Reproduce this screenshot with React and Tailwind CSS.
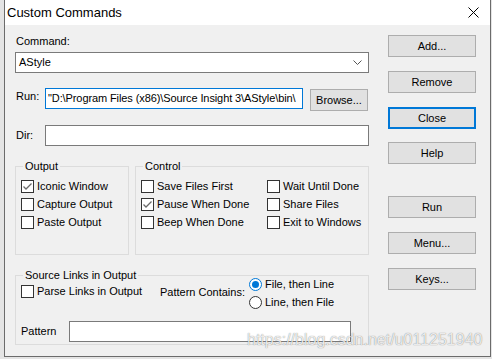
import React from "react";

const Check = ({ checked }) => (
  <span className="w-[13px] h-[13px] border border-[#333333] bg-white flex items-center justify-center shrink-0">
    {checked && (
      <svg width="11" height="11" viewBox="0 0 11 11">
        <polyline points="1.5,5.5 4,8 9.5,2.5" fill="none" stroke="#6a6a6a" strokeWidth="1.3" />
      </svg>
    )}
  </span>
);

const CheckRow = ({ label, checked }) => (
  <div className="flex items-center gap-[3px] h-[13px]">
    <Check checked={checked} />
    <span className="leading-[13px] whitespace-nowrap">{label}</span>
  </div>
);

const Radio = ({ label, checked }) => (
  <div className="flex items-center gap-[3px] h-[13px]">
    <span
      className={
        checked
          ? "w-[13px] h-[13px] rounded-full border border-[#0078d7] bg-white flex items-center justify-center shrink-0"
          : "w-[13px] h-[13px] rounded-full border border-[#333333] bg-white flex items-center justify-center shrink-0"
      }
    >
      {checked && <span className="w-[7px] h-[7px] rounded-full bg-[#0078d7]" />}
    </span>
    <span className="leading-[13px] whitespace-nowrap">{label}</span>
  </div>
);

const Btn = ({ children, className = "", active }) => (
  <div
    className={
      (active
        ? "border-2 border-[#0078d7] "
        : "border border-[#adadad] ") +
      "h-[22px] bg-[#e1e1e1] flex items-center justify-center leading-[13px] " +
      className
    }
  >
    {children}
  </div>
);

export default function App() {
  return (
    <div className="w-[492px] h-[359px] bg-[#e4e4e4] relative overflow-hidden text-[11px] text-black font-['Liberation_Sans',Arial,sans-serif]">
      <div className="ml-[4px] w-[487px] h-[357px] bg-[#f0f0f0] border-l border-r border-b border-[#6b6b6b] flex flex-col">
        {/* Title bar */}
        <div className="h-[25px] bg-white flex items-center justify-between shrink-0">
          <span className="pl-[2px] text-[13px] leading-[16px]">Custom Commands</span>
          <svg width="11" height="11" viewBox="0 0 11 11" className="mr-[11px]">
            <path d="M0.5 0.5 L10.5 10.5 M10.5 0.5 L0.5 10.5" stroke="#000" strokeWidth="1" />
          </svg>
        </div>

        {/* Body */}
        <div className="flex flex-1">
          {/* Left column */}
          <div className="ml-[10px] w-[354px] flex flex-col">
            <div className="mt-[10px] ml-[1px] leading-[13px]">Command:</div>
            <div className="mt-[4px] h-[21px] bg-white border border-[#7a7a7a] flex items-center justify-between">
              <span className="pl-[3px] leading-[13px]">AStyle</span>
              <svg width="9" height="5" viewBox="0 0 9 5" className="mr-[6px]">
                <polyline points="0.5,0.5 4.5,4.5 8.5,0.5" fill="none" stroke="#555" strokeWidth="1" />
              </svg>
            </div>

            <div className="mt-[15px] flex items-start">
              <span className="ml-[1px] w-[29px] leading-[13px] mt-[2px]">Run:</span>
              <div className="w-[258px] h-[21px] bg-white border border-[#0078d7] flex items-center overflow-hidden">
                <span className="pl-[2px] whitespace-nowrap leading-[13px] tracking-[-0.1px]">
                  "D:\Program Files (x86)\Source Insight 3\AStyle\bin\
                </span>
              </div>
              <Btn className="ml-[7px] mt-[1px] w-[58px] h-[21px]">Browse...</Btn>
            </div>

            <div className="mt-[14px] flex items-center">
              <span className="ml-[1px] w-[29px] leading-[13px]">Dir:</span>
              <div className="flex-1 h-[21px] bg-white border border-[#7a7a7a]" />
            </div>

            <div className="mt-[14px] flex gap-[6px]">
              <fieldset className="w-[114px] h-[95px] border border-[#dcdcdc]">
                <legend className="ml-[7px] px-[2px] leading-[13px]">Output</legend>
                <div className="pt-[7px] pl-[5px] flex flex-col gap-[5px]">
                  <CheckRow label="Iconic Window" checked />
                  <CheckRow label="Capture Output" />
                  <CheckRow label="Paste Output" />
                </div>
              </fieldset>
              <fieldset className="flex-1 h-[95px] border border-[#dcdcdc]">
                <legend className="ml-[7px] px-[2px] leading-[13px]">Control</legend>
                <div className="pt-[7px] pl-[5px] grid grid-cols-[126px_1fr] gap-y-[5px]">
                  <CheckRow label="Save Files First" />
                  <CheckRow label="Wait Until Done" />
                  <CheckRow label="Pause When Done" checked />
                  <CheckRow label="Share Files" />
                  <CheckRow label="Beep When Done" />
                  <CheckRow label="Exit to Windows" />
                </div>
              </fieldset>
            </div>

            <fieldset className="mt-[14px] h-[76px] border border-[#dcdcdc]">
              <legend className="ml-[7px] px-[2px] leading-[13px]">Source Links in Output</legend>
              <div className="mt-[-4px] pl-[5px] flex items-start">
                <div className="w-[139px] mt-[7px]">
                  <CheckRow label="Parse Links in Output" />
                </div>
                <div className="w-[89px] mt-[8px] leading-[13px] whitespace-nowrap">Pattern Contains:</div>
                <div className="flex flex-col gap-[5px]">
                  <Radio label="File, then Line" checked />
                  <Radio label="Line, then File" />
                </div>
              </div>
              <div className="mt-[12px] pl-[5px] flex items-center">
                <span className="w-[48px] leading-[13px]">Pattern</span>
                <div className="w-[282px] h-[21px] bg-white border border-[#7a7a7a]" />
              </div>
            </fieldset>
          </div>

          {/* Right column */}
          <div className="ml-[19px] w-[88px] flex flex-col">
            <Btn className="mt-[10px]">Add...</Btn>
            <Btn className="mt-[14px]">Remove</Btn>
            <Btn className="mt-[14px]" active>Close</Btn>
            <Btn className="mt-[13px]">Help</Btn>
            <Btn className="mt-[32px]">Run</Btn>
            <Btn className="mt-[14px]">Menu...</Btn>
            <Btn className="mt-[14px]">Keys...</Btn>
          </div>
        </div>
      </div>

      <div className="absolute left-[247px] top-[331px] text-[16px] leading-[18px] whitespace-nowrap text-[rgba(255,255,255,0.85)] [text-shadow:0_0_1px_rgba(0,0,0,0.55)]">
        https://blog.csdn.net/u011251940
      </div>
    </div>
  );
}
